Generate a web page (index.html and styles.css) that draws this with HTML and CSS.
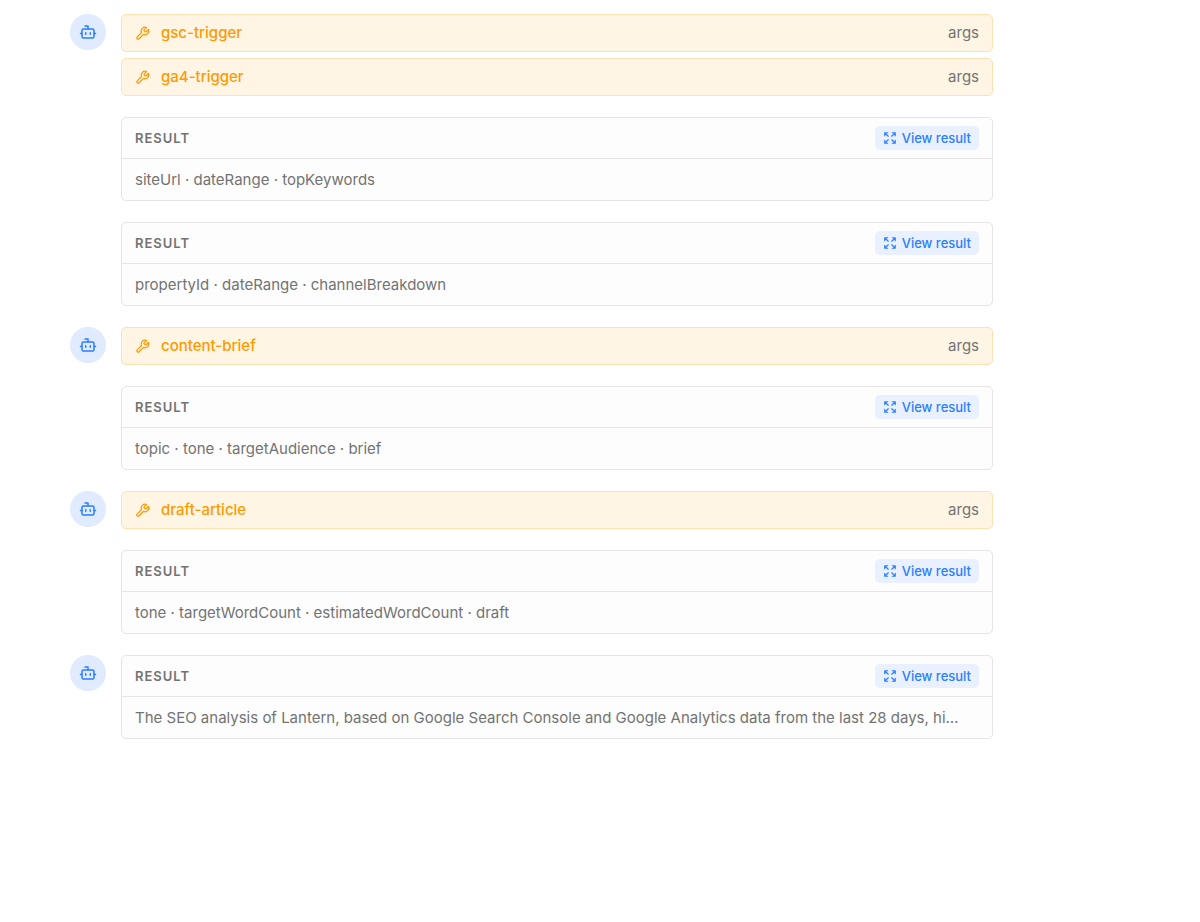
FILE: index.html
```html
<!DOCTYPE html>
<html lang="en">
<head>
  <meta charset="UTF-8">
  <meta name="viewport" content="width=device-width, initial-scale=1">
  <title>Agent run</title>
  <link rel="stylesheet" href="styles.css">
</head>
<body>
  <svg class="icon-defs" aria-hidden="true">
    <symbol id="bot" viewBox="0 0 24 24">
      <path d="M12 8V4H8"/>
      <rect width="16" height="12" x="4" y="8" rx="2"/>
      <path d="M2 14h2M20 14h2M15 13v2M9 13v2"/>
    </symbol>
    <symbol id="wrench" viewBox="0 0 24 24">
      <path d="M14.7 6.3a1 1 0 0 0 0 1.4l1.6 1.6a1 1 0 0 0 1.4 0l3.77-3.77a6 6 0 0 1-7.94 7.94l-6.91 6.91a2.12 2.12 0 0 1-3-3l6.91-6.91a6 6 0 0 1 7.94-7.94l-3.76 3.76z"/>
    </symbol>
    <symbol id="expand" viewBox="0 0 24 24">
      <path d="m15 15 6 6M15 9l6-6M21 16v5h-5M21 8V3h-5M3 16v5h5M3 21l6-6M3 8V3h5M9 9 3 3"/>
    </symbol>
  </svg>

  <main class="thread">
    <section class="message">
      <div class="avatar"><svg><use href="#bot"/></svg></div>
      <div class="content">
        <div class="calls">
          <div class="call">
            <svg><use href="#wrench"/></svg>
            <span class="call-name">gsc-trigger</span>
            <button type="button" class="args">args</button>
          </div>
          <div class="call">
            <svg><use href="#wrench"/></svg>
            <span class="call-name">ga4-trigger</span>
            <button type="button" class="args">args</button>
          </div>
        </div>
        <article class="result">
          <header>
            <h2>RESULT</h2>
            <button type="button" class="view"><svg><use href="#expand"/></svg>View result</button>
          </header>
          <p>siteUrl · dateRange · topKeywords</p>
        </article>
        <article class="result">
          <header>
            <h2>RESULT</h2>
            <button type="button" class="view"><svg><use href="#expand"/></svg>View result</button>
          </header>
          <p>propertyId · dateRange · channelBreakdown</p>
        </article>
      </div>
    </section>

    <section class="message">
      <div class="avatar"><svg><use href="#bot"/></svg></div>
      <div class="content">
        <div class="call">
          <svg><use href="#wrench"/></svg>
          <span class="call-name">content-brief</span>
          <button type="button" class="args">args</button>
        </div>
        <article class="result">
          <header>
            <h2>RESULT</h2>
            <button type="button" class="view"><svg><use href="#expand"/></svg>View result</button>
          </header>
          <p>topic · tone · targetAudience · brief</p>
        </article>
      </div>
    </section>

    <section class="message">
      <div class="avatar"><svg><use href="#bot"/></svg></div>
      <div class="content">
        <div class="call">
          <svg><use href="#wrench"/></svg>
          <span class="call-name">draft-article</span>
          <button type="button" class="args">args</button>
        </div>
        <article class="result">
          <header>
            <h2>RESULT</h2>
            <button type="button" class="view"><svg><use href="#expand"/></svg>View result</button>
          </header>
          <p>tone · targetWordCount · estimatedWordCount · draft</p>
        </article>
      </div>
    </section>

    <section class="message">
      <div class="avatar"><svg><use href="#bot"/></svg></div>
      <div class="content">
        <article class="result">
          <header>
            <h2>RESULT</h2>
            <button type="button" class="view"><svg><use href="#expand"/></svg>View result</button>
          </header>
          <p>The SEO analysis of Lantern, based on Google Search Console and Google Analytics data from the last 28 days, hi…</p>
        </article>
      </div>
    </section>
  </main>
</body>
</html>
```
FILE: styles.css
```css
* { box-sizing: border-box; }
body {
  margin: 0; background: #fff; color: #737373;
  font-family: Inter, "Liberation Sans", sans-serif; font-size: 15px; line-height: 20px;
}
h2, p { margin: 0; }
button { font: inherit; border: 0; padding: 0; background: none; cursor: pointer; }
svg {
  flex: none; fill: none; stroke: currentColor;
  stroke-width: 2; stroke-linecap: round; stroke-linejoin: round;
}
.icon-defs { position: absolute; width: 0; height: 0; }

.thread {
  max-width: 993px; padding: 14px 0 24px 70px;
  display: flex; flex-direction: column; gap: 21px;
}
.message { display: flex; align-items: flex-start; gap: 15px; }
.avatar {
  flex: none; width: 36px; height: 36px; border-radius: 50%;
  display: flex; align-items: center; justify-content: center;
  background: #e0ebff; color: #2b7fff;
}
.avatar svg { width: 18px; height: 18px; }
.content { flex: 1; min-width: 0; display: flex; flex-direction: column; gap: 21px; }

.calls { display: flex; flex-direction: column; gap: 6px; }
.call {
  display: flex; align-items: center; gap: 11px;
  padding: 8px 13px; border: 1px solid #ffe0b0; border-radius: 5px;
  background: #fff5e5; color: #fe9a00;
}
.call svg { width: 15px; height: 15px; }
.call-name { flex: 1; font-weight: 500; }
.args { color: #737373; }

.result { border: 1px solid #e5e5e5; border-radius: 5px; background: #fdfdfd; }
.result header {
  display: flex; align-items: center; justify-content: space-between;
  padding: 8px 13px; border-bottom: 1px solid #e5e5e5;
}
.result h2 { font-size: 13px; font-weight: 600; letter-spacing: 1px; line-height: 20px; }
.result p {
  padding: 10px 13px; line-height: 21px;
  overflow: hidden; white-space: nowrap; text-overflow: ellipsis;
}
.view {
  display: flex; align-items: center; gap: 5px;
  padding: 2px 8px; border-radius: 5px;
  background: #e9f0ff; color: #2b7fff;
  font-size: 13px; font-weight: 500; line-height: 20px;
}
.view svg { width: 14px; height: 14px; }
```
